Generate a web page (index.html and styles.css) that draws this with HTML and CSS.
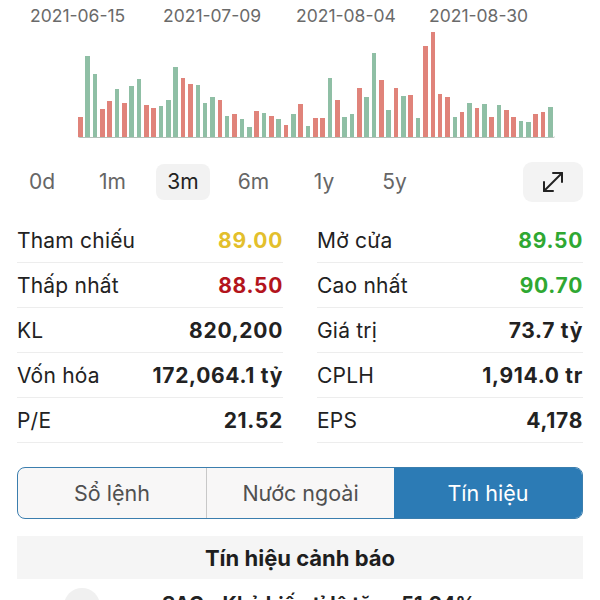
FILE: index.html
```html
<!DOCTYPE html>
<html>
<head>
<meta charset="utf-8">
<link rel="stylesheet" href="styles.css">
</head>
<body>
<div class="page">
  <div class="dates">
    <span>2021-06-15</span><span>2021-07-09</span><span>2021-08-04</span><span>2021-08-30</span>
  </div>
  <div class="chart">
    <div class="bars">
      <i class="r" style="height:20px"></i><i class="g" style="height:81px"></i><i class="g" style="height:63px"></i><i class="r" style="height:28px"></i><i class="r" style="height:36px"></i><i class="g" style="height:48px"></i><i class="r" style="height:34px"></i><i class="g" style="height:51px"></i><i class="g" style="height:58px"></i><i class="r" style="height:32px"></i><i class="r" style="height:29px"></i><i class="g" style="height:31px"></i><i class="g" style="height:37px"></i><i class="g" style="height:70px"></i><i class="r" style="height:59px"></i><i class="r" style="height:53px"></i><i class="g" style="height:52px"></i><i class="g" style="height:34px"></i><i class="g" style="height:40px"></i><i class="r" style="height:37px"></i><i class="g" style="height:21px"></i><i class="r" style="height:23px"></i><i class="g" style="height:18px"></i><i class="g" style="height:10px"></i><i class="r" style="height:26px"></i><i class="g" style="height:24px"></i><i class="r" style="height:21px"></i><i class="g" style="height:18px"></i><i class="r" style="height:12px"></i><i class="g" style="height:23px"></i><i class="r" style="height:33px"></i><i class="g" style="height:11px"></i><i class="r" style="height:19px"></i><i class="r" style="height:19px"></i><i class="g" style="height:59px"></i><i class="r" style="height:37px"></i><i class="g" style="height:20px"></i><i class="g" style="height:23px"></i><i class="r" style="height:49px"></i><i class="g" style="height:40px"></i><i class="g" style="height:84px"></i><i class="r" style="height:57px"></i><i class="g" style="height:27px"></i><i class="r" style="height:49px"></i><i class="g" style="height:41px"></i><i class="r" style="height:42px"></i><i class="g" style="height:19px"></i><i class="r" style="height:91px"></i><i class="r" style="height:105px"></i><i class="r" style="height:43px"></i><i class="r" style="height:40px"></i><i class="g" style="height:20px"></i><i class="r" style="height:25px"></i><i class="g" style="height:34px"></i><i class="r" style="height:29px"></i><i class="g" style="height:33px"></i><i class="r" style="height:20px"></i><i class="g" style="height:32px"></i><i class="r" style="height:27px"></i><i class="r" style="height:20px"></i><i class="g" style="height:16px"></i><i class="g" style="height:15px"></i><i class="r" style="height:23px"></i><i class="r" style="height:25px"></i><i class="g" style="height:30px"></i>
    </div>
  </div>
  <div class="periods">
    <span class="per">0d</span>
    <span class="per">1m</span>
    <span class="per active">3m</span>
    <span class="per">6m</span>
    <span class="per">1y</span>
    <span class="per">5y</span>
    <span class="expand">
      <svg width="24" height="24" viewBox="0 0 24 24" fill="none" stroke="#222" stroke-width="2" stroke-linecap="round" stroke-linejoin="round">
        <path d="M3 21 L21 3"/>
        <path d="M12 3 H21 V12"/>
        <path d="M3 12 V21 H12"/>
      </svg>
    </span>
  </div>
  <div class="stats">
    <div class="col">
      <div class="row"><span class="lbl">Tham chiếu</span><span class="val yellow">89.00</span></div>
      <div class="row"><span class="lbl">Thấp nhất</span><span class="val red">88.50</span></div>
      <div class="row"><span class="lbl">KL</span><span class="val">820,200</span></div>
      <div class="row"><span class="lbl">Vốn hóa</span><span class="val">172,064.1 tỷ</span></div>
      <div class="row"><span class="lbl">P/E</span><span class="val">21.52</span></div>
    </div>
    <div class="col">
      <div class="row"><span class="lbl">Mở cửa</span><span class="val green">89.50</span></div>
      <div class="row"><span class="lbl">Cao nhất</span><span class="val green">90.70</span></div>
      <div class="row"><span class="lbl">Giá trị</span><span class="val">73.7 tỷ</span></div>
      <div class="row"><span class="lbl">CPLH</span><span class="val">1,914.0 tr</span></div>
      <div class="row"><span class="lbl">EPS</span><span class="val">4,178</span></div>
    </div>
  </div>
  <div class="tabs">
    <span class="tab">Sổ lệnh</span>
    <span class="tab">Nước ngoài</span>
    <span class="tab sel">Tín hiệu</span>
  </div>
  <div class="section">Tín hiệu cảnh báo</div>
  <div class="signal">
    <span class="dot"></span>
    <span class="sigtext">SAC - Khả biến tỉ lệ tăng 51.94%</span>
  </div>
</div>
</body>
</html>
```
FILE: styles.css
```css
html, body {
  margin: 0;
  padding: 0;
  background: #fff;
}
body {
  font-family: "Inter", "Liberation Sans", sans-serif;
  color: #222;
  width: 600px;
  height: 600px;
  overflow: hidden;
}
.page {
  display: flex;
  flex-direction: column;
}
.page > * {
  flex: none;
}
.dates {
  display: grid;
  grid-template-columns: repeat(4, 133px);
  padding-left: 30px;
  height: 30px;
  align-items: center;
  font-size: 17.5px;
  color: #6a6a6a;
}
.chart {
  height: 130px;
  padding-left: 78px;
  display: flex;
  align-items: flex-start;
}
.bars {
  width: 477px;
  height: 107px;
  display: flex;
  align-items: flex-end;
  gap: 2.75px;
  border-bottom: 1.5px solid #b5c2ba;
  border-radius: 0 0 2px 2px;
}
.bars i {
  display: block;
  width: 4.6px;
  flex: none;
}
.bars i.g { background: #8fbfa5; }
.bars i.r { background: #e0837a; }

.periods {
  display: flex;
  align-items: center;
  height: 44px;
  padding: 0 17px 0 15px;
}
.per {
  font-size: 21px;
  color: #666;
  width: 54px;
  text-align: center;
  height: 36px;
  line-height: 36px;
  margin-right: 16.5px;
  border-radius: 8px;
}
.per.active {
  background: #f2f2f2;
  color: #222;
}
.expand {
  margin-left: auto;
  width: 60px;
  height: 40px;
  background: #f3f3f3;
  border-radius: 9px;
  display: flex;
  align-items: center;
  justify-content: center;
}
.stats {
  display: grid;
  grid-template-columns: 266px 266px;
  column-gap: 34px;
  padding: 14px 17px 0;
}
.row {
  height: 44px;
  display: flex;
  justify-content: space-between;
  align-items: center;
  border-bottom: 1px solid #ededed;
  font-size: 21px;
}
.lbl { color: #222; letter-spacing: 0.2px; }
.val { font-weight: 700; color: #222; letter-spacing: 0.7px; }
.val.yellow { color: #e3bf2c; }
.val.red { color: #b3141c; }
.val.green { color: #2fa832; }

.tabs {
  margin: 24px 17px 0;
  height: 50px;
  display: grid;
  grid-template-columns: 1fr 1fr 1fr;
  border: 1.5px solid #3b7eae;
  border-radius: 8px;
  overflow: hidden;
  background: #f8f7f7;
}
.tab {
  display: flex;
  align-items: center;
  justify-content: center;
  font-size: 21.5px;
  color: #505050;
}
.tab + .tab { border-left: 1px solid #c8c8c8; }
.tab.sel {
  background: #2c7bb5;
  color: #fff;
  border-left: none;
}
.section {
  margin: 17px 17px 0;
  height: 43px;
  background: #f5f5f5;
  display: flex;
  align-items: center;
  justify-content: center;
  font-size: 22px;
  font-weight: 700;
  color: #1e1e1e;
}
.signal {
  display: flex;
  align-items: flex-start;
  padding: 9px 0 0 64px;
}
.dot {
  width: 36px;
  height: 36px;
  border-radius: 50%;
  background: #f0f0f0;
  margin-right: 62px;
  flex: none;
}
.sigtext {
  font-size: 20px;
  font-weight: 700;
  margin-top: 4px;
  white-space: nowrap;
}
```
